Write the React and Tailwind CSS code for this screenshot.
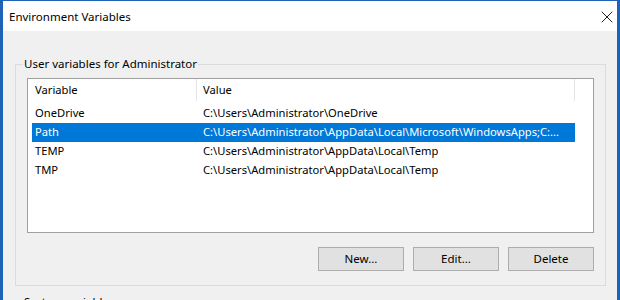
import { X } from 'lucide-react';

const FONT = { fontFamily: '"Noto Sans", "Liberation Sans", sans-serif' };

const ROWS = [
  { name: 'OneDrive', value: 'C:\\Users\\Administrator\\OneDrive' },
  { name: 'Path', value: 'C:\\Users\\Administrator\\AppData\\Local\\Microsoft\\WindowsApps;C:...', selected: true },
  { name: 'TEMP', value: 'C:\\Users\\Administrator\\AppData\\Local\\Temp' },
  { name: 'TMP', value: 'C:\\Users\\Administrator\\AppData\\Local\\Temp' },
];

function Button({ children }) {
  return (
    <button className="w-[86px] h-[24px] border border-[#adadad] bg-[#e1e1e1] text-[11.5px] text-black flex items-center justify-center">
      {children}
    </button>
  );
}

export default function App() {
  return (
    <div className="w-[620px] h-[300px] overflow-hidden bg-[#1f63b8] pt-px pl-[3px] pr-[3px]" style={FONT}>
      <div className="h-full bg-[#f0f0f0] flex flex-col text-black">
        {/* Title bar */}
        <div className="h-[30px] shrink-0 bg-white flex items-center justify-between pl-[6px]">
          <span className="text-[11.5px] pt-[2px]">Environment Variables</span>
          <div className="w-[20px] h-[20px] flex items-center justify-center mt-[1px]">
            <X size={20} strokeWidth={1.2} className="text-[#222]" />
          </div>
        </div>

        {/* User variables */}
        <fieldset className="mt-[25px] ml-[12px] mr-[11px] border border-[#dcdcdc] pb-[14px]">
          <legend className="text-[11.5px] leading-[16px] ml-[7px] px-[1px]">User variables for Administrator</legend>
          <div className="px-[11px]">
            <div className="mt-[6px] h-[155px] border border-[#a0a0a0] bg-white text-[11.2px]">
              <div className="h-[25px] flex pb-[3px]">
                <div className="w-[169px] pl-[7px] flex items-center border-r border-[#e5e5e5]">Variable</div>
                <div className="w-[378px] pl-[6px] flex items-center border-r border-[#e5e5e5]">Value</div>
              </div>
              {ROWS.map(row => (
                <div
                  key={row.name}
                  className={`ml-[4px] w-[543px] h-[19px] flex items-center ${row.selected ? 'bg-[#0078d7] text-white' : ''}`}
                >
                  <div className="w-[165px] pl-[3px]">{row.name}</div>
                  <div className="pl-[6px] whitespace-nowrap overflow-hidden">{row.value}</div>
                </div>
              ))}
            </div>
            <div className="mt-[14px] flex justify-end gap-[9px]">
              <Button>New...</Button>
              <Button>Edit...</Button>
              <Button>Delete</Button>
            </div>
          </div>
        </fieldset>

        {/* System variables (cut off by the window edge) */}
        <fieldset className="mt-[8px] ml-[12px] mr-[11px] border border-[#dcdcdc] h-[60px] shrink-0">
          <legend className="text-[11.5px] leading-[16px] ml-[7px] px-[1px]">System variables</legend>
        </fieldset>
      </div>
    </div>
  );
}
